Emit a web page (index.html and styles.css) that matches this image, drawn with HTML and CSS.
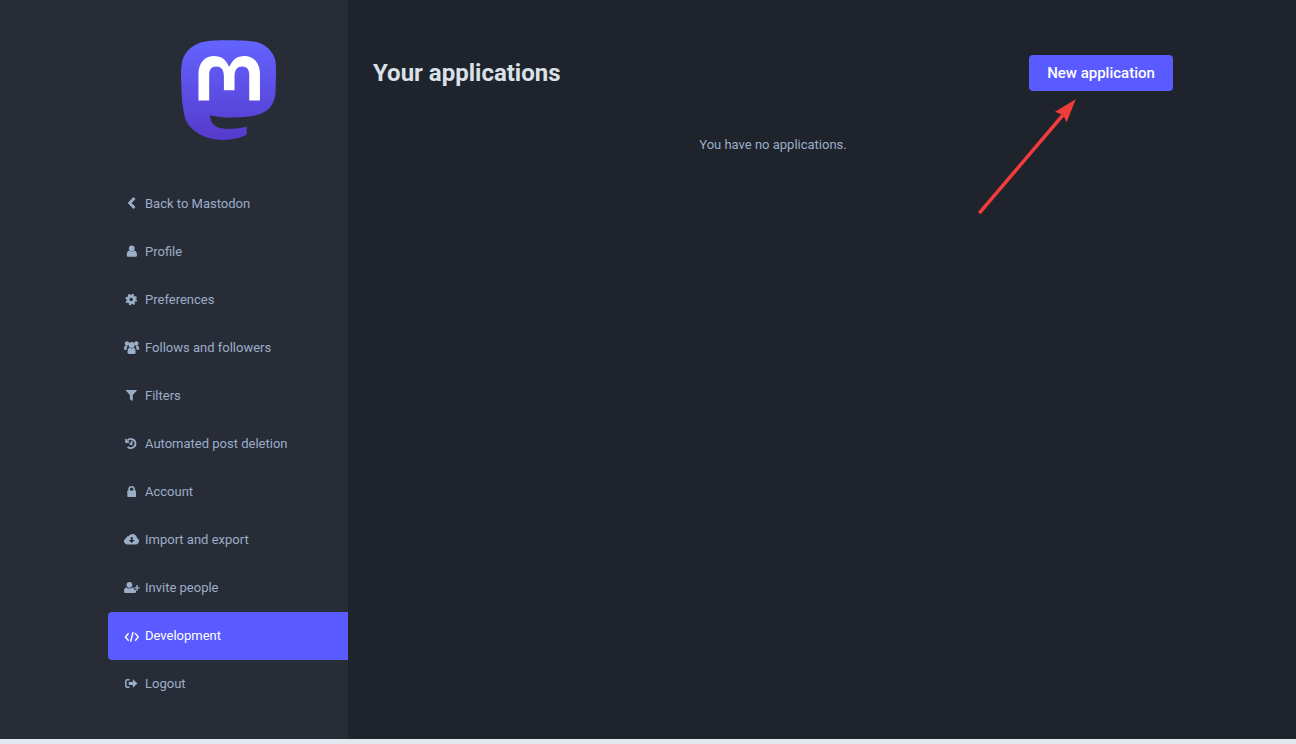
FILE: index.html
```html
<!DOCTYPE html>
<html lang="en">
<head>
<meta charset="utf-8">
<title>Your applications</title>
<link rel="stylesheet" href="styles.css">
</head>
<body>
<div class="admin">
  <aside class="sidebar">
    <div class="logo-wrap">
      <svg class="logo" viewBox="0 0 74 79" preserveAspectRatio="none" aria-label="Mastodon">
        <defs><linearGradient id="lg" x1="0" y1="0" x2="0" y2="1"><stop offset="0" stop-color="#6364ff"/><stop offset="1" stop-color="#563acc"/></linearGradient></defs>
        <rect x="12" y="11" width="51" height="38" fill="#fff"/>
        <path fill="url(#lg)" d="M73.7014 17.4323C72.5616 9.05152 65.1774 2.4469 56.424 1.1671C54.9472 0.950843 49.3518 0.163818 36.3901 0.163818H36.2933C23.3281 0.163818 20.5465 0.950843 19.0697 1.1671C10.56 2.41145 2.78877 8.34604 0.903306 16.826C-0.00357854 21.0022 -0.100361 25.6322 0.068112 29.8793C0.308275 35.9699 0.354874 42.0498 0.91406 48.1156C1.30064 52.1448 1.97502 56.1419 2.93215 60.0769C4.72441 67.3445 11.9795 73.3925 19.0876 75.86C26.6979 78.4332 34.8821 78.8603 42.724 77.0937C43.5866 76.8952 44.4398 76.6647 45.2833 76.4024C47.1867 75.8033 49.4199 75.1332 51.0616 73.9562C51.0841 73.9397 51.1026 73.9184 51.1156 73.8938C51.1286 73.8693 51.1359 73.8421 51.1368 73.8144V67.9366C51.1364 67.9107 51.1302 67.8852 51.1186 67.862C51.1069 67.8388 51.0902 67.8184 51.0695 67.8025C51.0489 67.7865 51.0249 67.7753 50.9994 67.7696C50.9738 67.764 50.9473 67.7641 50.9218 67.7699C45.8976 68.9569 40.7491 69.5519 35.5836 69.5425C26.694 69.5425 24.3031 65.3699 23.6184 63.6327C23.0681 62.1314 22.7186 60.5654 22.5789 58.9744C22.5775 58.9477 22.5825 58.921 22.5934 58.8965C22.6043 58.8721 22.621 58.8505 22.6419 58.8336C22.6629 58.8167 22.6876 58.8049 22.714 58.7992C22.7404 58.7934 22.7678 58.794 22.794 58.8007C27.7345 59.9796 32.799 60.5746 37.8813 60.5733C39.1036 60.5733 40.3223 60.5733 41.5447 60.5414C46.6562 60.3996 52.0437 60.1408 57.0728 59.1694C57.1983 59.1446 57.3237 59.1233 57.4313 59.0914C65.3638 57.5847 72.9128 52.8555 73.6799 40.8799C73.7086 40.4084 73.7803 35.9415 73.7803 35.4523C73.7839 33.7896 74.3216 23.6576 73.7014 17.4323ZM61.4925 47.3144H53.1514V27.107C53.1514 22.8528 51.3591 20.6832 47.7136 20.6832C43.7061 20.6832 41.6988 23.2499 41.6988 28.3194V39.3803H33.4078V28.3194C33.4078 23.2499 31.3969 20.6832 27.3894 20.6832C23.7654 20.6832 21.9552 22.8528 21.9516 27.107V47.3144H13.6176V26.4937C13.6176 22.2395 14.7157 18.8598 16.9118 16.3545C19.1772 13.8552 22.1488 12.5719 25.8373 12.5719C30.1064 12.5719 33.3325 14.1955 35.4832 17.4394L37.5587 20.8853L39.6377 17.4394C41.7884 14.1955 45.0145 12.5719 49.2765 12.5719C52.9614 12.5719 55.9329 13.8552 58.2055 16.3545C60.4017 18.8575 61.4997 22.2371 61.4997 26.4937L61.4925 47.3144Z"/>
      </svg>
    </div>
    <nav class="nav">
      <a class="nav-item"><svg class="icon" viewBox="0 0 17 16"><path d="M11.500 3 6.600 8l4.900 5" fill="none" stroke="currentColor" stroke-width="2.800"/></svg>Back to Mastodon</a>
      <a class="nav-item"><svg class="icon" viewBox="0 0 17 16"><g fill="currentColor"><circle cx="8.800" cy="5.500" r="2.900"/><path d="M3.700 12.200c0-2.800.9-4.300 2.500-4.400.7.500 1.600.8 2.600.8s1.900-.3 2.600-.8c1.600.1 2.600 1.600 2.600 4.400 0 1-.7 1.500-1.700 1.500H5.400c-1 0-1.700-.5-1.700-1.500z"/></g></svg>Profile</a>
      <a class="nav-item"><svg class="icon" viewBox="0 0 17 16"><circle cx="8.200" cy="8.500" r="3.200" fill="none" stroke="currentColor" stroke-width="3"/><circle cx="8.200" cy="8.500" r="5" fill="none" stroke="currentColor" stroke-width="1.700" stroke-dasharray="2 1.930"/></svg>Preferences</a>
      <a class="nav-item"><svg class="icon" viewBox="0 0 17 16"><g fill="currentColor"><circle cx="3.900" cy="4.500" r="2.200"/><circle cx="13.300" cy="4.500" r="2.200"/><circle cx="8.600" cy="6" r="3"/><path d="M1 10.300c0-2.400.7-3.500 1.900-3.500.4.300.9.500 1.500.5-.5.900-.7 2-.7 3.500H1.900c-.5 0-.9-.1-.9-.5zM16.200 10.300c0-2.400-.7-3.500-1.900-3.500-.4.300-.9.500-1.500.5.500.9.700 2 .7 3.500h1.800c.5 0 .9-.1.900-.5zM4.500 13.300c0-2.900.8-4.500 2.200-4.600.5.400 1.200.7 1.900.7s1.400-.3 1.900-.7c1.400.1 2.200 1.700 2.200 4.600 0 1.100-.6 1.700-1.500 1.700H6c-.9 0-1.500-.6-1.500-1.700z"/></g></svg>Follows and followers</a>
      <a class="nav-item"><svg class="icon" viewBox="0 0 17 16"><path d="M3.300 3h10.100c.3 0 .5.500.2.800L9.800 8v6l-2.900-1.800V8L3.100 3.800c-.3-.3-.1-.8.200-.8z" fill="currentColor"/></svg>Filters</a>
      <a class="nav-item"><svg class="icon" viewBox="0 0 17 16"><path d="M4.600 5.200A4.600 4.600 0 1 1 4.700 11.900" fill="none" stroke="currentColor" stroke-width="2"/><path d="M2.200 3.200 7 7.700 2.200 8z" fill="currentColor"/><path d="M8.700 5.800v3.300H6.600" fill="none" stroke="currentColor" stroke-width="1.600"/></svg>Automated post deletion</a>
      <a class="nav-item"><svg class="icon" viewBox="0 0 17 16"><rect x="4.300" y="7.500" width="8.700" height="6.500" rx=".8" fill="currentColor"/><path d="M6.100 8V6.300a2.550 2.550 0 0 1 5.100 0V8" fill="none" stroke="currentColor" stroke-width="1.700"/></svg>Account</a>
      <a class="nav-item"><svg class="icon" viewBox="0 0 17 16"><path fill-rule="evenodd" d="M4.500 13.400C2.600 13.400 1 12 1 10.200c0-1.400.9-2.600 2.200-3C3.400 5.800 4.500 5.200 5.500 5.400 6.300 3.900 7.800 3 9.500 3c2.400 0 4.300 1.800 4.500 4.100 1.200.5 2 1.600 2 2.900 0 1.900-1.500 3.400-3.400 3.400zM7.800 6v3H5.700l3 3.100 3-3.100H9.700V6z" fill="currentColor"/></svg>Import and export</a>
      <a class="nav-item"><svg class="icon" viewBox="0 0 17 16"><g fill="currentColor"><circle cx="6.400" cy="5.800" r="2.900"/><path d="M1 12.500c0-2.500.8-3.900 2.400-4 .8.600 1.900.9 3 .9s2.200-.3 3-.9c.6 0 1.100.3 1.500.8v1.400h2v.3c.1.500.1.900.1 1.500 0 1-.7 1.500-1.600 1.500H2.600c-.9 0-1.600-.5-1.600-1.500z"/><path d="M13.300 6h1.400v2.200h1.900v1.400h-1.900v2.100h-1.400V9.600h-2.100V8.200h2.100z"/></g></svg>Invite people</a>
      <a class="nav-item active"><svg class="icon" viewBox="0 0 17 16"><path d="M5.600 5.200 2.400 9l3.200 3.800M12.100 5.200 15.300 9l-3.200 3.800M10.200 4 7.500 13.800" fill="none" stroke="currentColor" stroke-width="1.400"/></svg>Development</a>
      <a class="nav-item"><svg class="icon" viewBox="0 0 17 16"><path d="M6.500 4.800H4.400c-1 0-1.600.6-1.600 1.500v4.400c0 1 .6 1.500 1.600 1.500h2.100" fill="none" stroke="currentColor" stroke-width="1.500"/><path d="M5.800 7h4V4.200l4.700 4.300-4.700 4.300V10h-4z" fill="currentColor"/></svg>Logout</a>
    </nav>
  </aside>
  <main class="content">
    <header class="content-head">
      <h1 class="title">Your applications</h1>
      <a class="button">New application</a>
    </header>
    <p class="empty">You have no applications.</p>
  </main>
</div>
<div class="strip"></div>
<svg class="arrow" viewBox="0 0 1296 744"><path d="M979.300 213.200 1063 115" fill="none" stroke="#f03c3c" stroke-width="3.500"/><path d="M1075.700 99.300 1055 111.700 1063 115 1066.700 122.300z" fill="#f03c3c"/></svg>
</body>
</html>
```

FILE: styles.css
```css
* { box-sizing: border-box; }
html, body { margin: 0; height: 100%; }
body {
  display: flex;
  flex-direction: column;
  background: #1f232b;
  font-family: Roboto, "Liberation Sans", sans-serif;
  overflow: hidden;
}
.admin { display: flex; height: 739px; flex: none; }
.sidebar {
  width: 348px;
  flex: none;
  background: #282c37;
  padding-left: 108px;
}
.logo-wrap { display: flex; justify-content: center; padding-top: 40px; height: 179px; }
.logo { width: 95px; height: 101px; }
.nav { display: flex; flex-direction: column; }
.nav-item {
  display: flex;
  align-items: center;
  height: 48px;
  padding-left: 15px;
  font-size: 13px;
  color: #9baec8;
}
.nav-item.active {
  margin: 1px 0 -1px;
  padding-bottom: 1px;
  background: #595aff;
  color: #fff;
  border-radius: 4px 0 0 4px;
}
.icon { width: 17px; height: 16px; margin-right: 5px; flex: none; }
.content { width: 850px; padding: 0 25px; }
.content-head {
  display: flex;
  align-items: center;
  justify-content: space-between;
  margin-top: 55px;
  height: 36px;
}
.title { margin: -1px 0 0; font-size: 24px; font-weight: 700; color: #d9e1e8; }
.button {
  display: flex;
  align-items: center;
  justify-content: center;
  width: 144px;
  height: 36px;
  border-radius: 4px;
  background: #595aff;
  color: #fff;
  font-size: 15px;
  font-weight: 500;
}
.empty {
  margin: 45px 0 0;
  font-size: 13px;
  line-height: 18px;
  text-align: center;
  color: #9baec8;
}
.strip { flex: 1; background: #dfe9ee; }
.arrow { position: absolute; left: 0; top: 0; width: 1296px; height: 744px; pointer-events: none; }
```
